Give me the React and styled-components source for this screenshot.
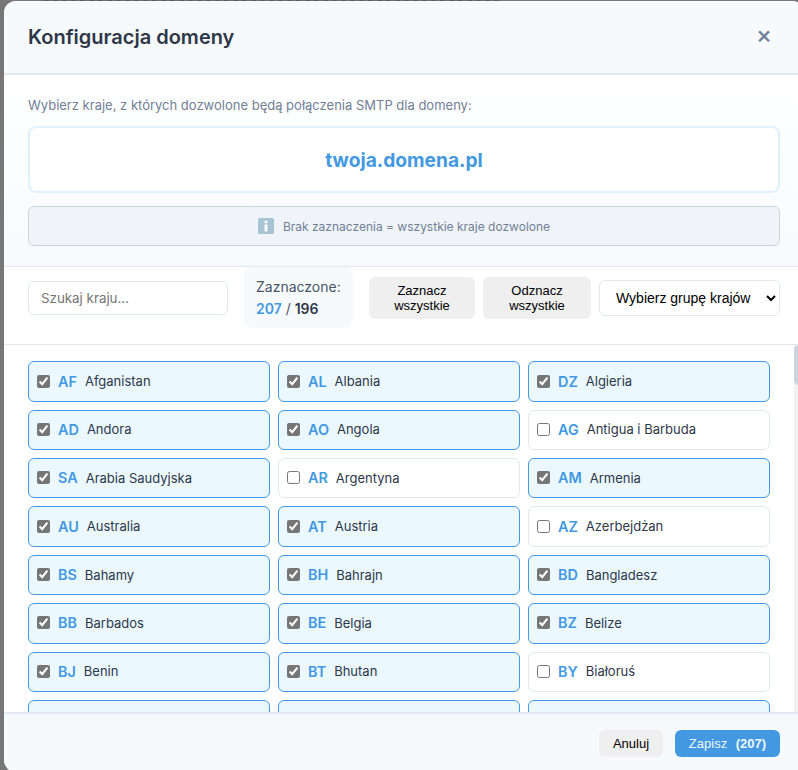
import React from "react";
import styled, { createGlobalStyle } from "styled-components";

const Global = createGlobalStyle`
  html, body { margin: 0; padding: 0; height: 100%; overflow: hidden; background: #777777; }
  * { box-sizing: border-box; }
`;

const Backdrop = styled.div`
  width: 798px;
  height: 770px;
  overflow: hidden;
  padding: 1px 0 0 4px;
  background: repeating-linear-gradient(90deg, #555c6a 0 5px, #777777 5px 9px) 44px 0 / 458px 1px no-repeat, #777777;
  font-family: Inter, "Liberation Sans", sans-serif;
`;

const Modal = styled.div`
  width: 800px;
  height: 771px;
  display: flex;
  flex-direction: column;
  background: #ffffff;
  border-radius: 12px;
  overflow: hidden;
`;

const Header = styled.header`
  flex: none;
  height: 74px;
  padding: 0 24px;
  display: flex;
  align-items: center;
  justify-content: space-between;
  background: #f7fafc;
  border-bottom: 2px solid #e2e8f0;
`;

const Title = styled.h2`
  margin: 0;
  font-size: 20px;
  font-weight: 600;
  color: #2d3748;
`;

const Close = styled.button`
  width: 32px;
  height: 32px;
  padding: 0 0 4px;
  border: none;
  background: transparent;
  color: #718096;
  font-family: Inter, sans-serif;
  font-size: 24px;
  font-weight: 500;
  line-height: 1;
`;

const Intro = styled.section`
  flex: none;
  height: 192px;
  padding: 20px 24px 0;
  background: linear-gradient(180deg, #ffffff 0%, #f7fafc 100%);
  border-bottom: 1px solid #e2e8f0;
`;

const Lead = styled.p`
  margin: 0 0 11px;
  font-size: 13px;
  line-height: 20px;
  color: #718096;
`;

const DomainCard = styled.div`
  height: 67px;
  display: flex;
  align-items: center;
  justify-content: center;
  background: #ffffff;
  border: 2px solid #e1f2fe;
  border-radius: 8px;
  font-size: 19.2px;
  font-weight: 700;
  color: #4299e1;
`;

const Notice = styled.div`
  margin-top: 13px;
  height: 40px;
  display: flex;
  align-items: center;
  justify-content: center;
  gap: 9px;
  background: #f0f4f8;
  border: 1px solid #cbd5e0;
  border-radius: 6px;
  font-size: 12px;
  color: #718096;
`;

const Toolbar = styled.div`
  flex: none;
  height: 78px;
  padding: 0 24px 16px;
  display: flex;
  align-items: center;
  gap: 16px;
  border-bottom: 1px solid #e2e8f0;
`;

const Search = styled.input`
  width: 200px;
  height: 34px;
  padding: 0 12px;
  border: 1px solid #e2e8f0;
  border-radius: 6px;
  font-family: Inter, sans-serif;
  font-size: 13.33px;
  background: #ffffff;
  &::placeholder { color: #757575; }
`;

const Stats = styled.div`
  width: 109px;
  height: 61px;
  padding: 9px 12px;
  background: #f7fafc;
  border-radius: 8px;
  font-size: 14px;
  line-height: 22px;
  color: #4a5568;
`;

const Count = styled.strong`
  font-weight: 600;
  color: ${(p) => (p.$accent ? "#4299e1" : "#2d3748")};
`;

const Actions = styled.div`
  display: flex;
  align-items: center;
  gap: 8px;
`;

const GreyButton = styled.button`
  width: ${(p) => p.$width}px;
  height: ${(p) => p.$height}px;
  padding: 0 8px;
  border: none;
  border-radius: 6px;
  background: #efefef;
  color: #000000;
  font-family: "Liberation Sans", Arial, sans-serif;
  font-size: 13px;
  line-height: 15px;
`;

const GroupSelect = styled.select`
  width: 181px;
  height: 36px;
  padding: 0 8px 0 12px;
  background: #ffffff;
  border: 1px solid #e2e8f0;
  border-radius: 6px;
  color: #000000;
  font-family: "Liberation Sans", Arial, sans-serif;
  font-size: 14px;
`;

const ListPane = styled.div`
  position: relative;
  flex: 1;
  min-height: 0;
  overflow: hidden;
  padding: 16.4px 34px 0 24px;
`;

const Grid = styled.div`
  display: grid;
  grid-template-columns: repeat(3, 1fr);
  grid-auto-rows: 40.36px;
  gap: 8px;
`;

const ScrollTrack = styled.div`
  position: absolute;
  top: 0;
  right: 0;
  bottom: 0;
  width: 10px;
  background: #f1f1f1;
`;

const ScrollThumb = styled.div`
  height: 40px;
  background: #cbd5e0;
  border-radius: 5px;
`;

const Card = styled.label`
  display: flex;
  align-items: center;
  gap: 8px;
  padding: 0 8px 1px;
  border: 1px solid ${(p) => (p.$on ? "#4299e1" : "#e2e8f0")};
  border-radius: 6px;
  background: ${(p) => (p.$on ? "#ebf8ff" : "#ffffff")};
`;

const Check = styled.input`
  width: 13px;
  height: 13px;
  margin: 0;
  flex: none;
  accent-color: #767676;
`;

const Code = styled.span`
  font-size: 14.4px;
  font-weight: 600;
  color: #4299e1;
`;

const Name = styled.span`
  font-size: 13px;
  color: #2d3748;
`;

const Footer = styled.footer`
  flex: none;
  height: 60px;
  padding: 16px 24px 0;
  display: flex;
  justify-content: flex-end;
  gap: 12px;
  background: #f7fafc;
  border-top: 2px solid #e2e8f0;
`;

const SaveButton = styled.button`
  width: 105px;
  height: 27px;
  padding: 0;
  border: none;
  border-radius: 6px;
  background: #4299e1;
  color: #f0f7fd;
  font-family: "Liberation Sans", Arial, sans-serif;
  font-size: 13px;
  b { margin-left: 5px; }
`;

const InfoIcon = () => (
  <svg width="16" height="16" viewBox="0 0 16 16" aria-hidden="true">
    <rect width="16" height="16" rx="1.5" fill="#a7c4d2" />
    <rect x="6.6" y="2.6" width="2.8" height="2.6" fill="#ffffff" />
    <rect x="6.6" y="6.4" width="2.8" height="7" fill="#ffffff" />
  </svg>
);

const countries = [
  ["AF", "Afganistan", 1], ["AL", "Albania", 1], ["DZ", "Algieria", 1],
  ["AD", "Andora", 1], ["AO", "Angola", 1], ["AG", "Antigua i Barbuda", 0],
  ["SA", "Arabia Saudyjska", 1], ["AR", "Argentyna", 0], ["AM", "Armenia", 1],
  ["AU", "Australia", 1], ["AT", "Austria", 1], ["AZ", "Azerbejdżan", 0],
  ["BS", "Bahamy", 1], ["BH", "Bahrajn", 1], ["BD", "Bangladesz", 1],
  ["BB", "Barbados", 1], ["BE", "Belgia", 1], ["BZ", "Belize", 1],
  ["BJ", "Benin", 1], ["BT", "Bhutan", 1], ["BY", "Białoruś", 0],
  ["r8a", "", 1], ["r8b", "", 1], ["r8c", "", 1],
];

export default function App() {
  return (
    <>
      <Global />
      <Backdrop>
        <Modal>
          <Header>
            <Title>Konfiguracja domeny</Title>
            <Close type="button">×</Close>
          </Header>
          <Intro>
            <Lead>Wybierz kraje, z których dozwolone będą połączenia SMTP dla domeny:</Lead>
            <DomainCard>twoja.domena.pl</DomainCard>
            <Notice>
              <InfoIcon />
              <span>Brak zaznaczenia = wszystkie kraje dozwolone</span>
            </Notice>
          </Intro>
          <Toolbar>
            <Search placeholder="Szukaj kraju..." />
            <Stats>
              Zaznaczone:
              <br />
              <Count $accent>207</Count> / <Count>196</Count>
            </Stats>
            <Actions>
              <GreyButton type="button" $width={106} $height={42}>Zaznacz wszystkie</GreyButton>
              <GreyButton type="button" $width={108} $height={42}>Odznacz wszystkie</GreyButton>
              <GroupSelect defaultValue="">
                <option value="">Wybierz grupę krajów</option>
              </GroupSelect>
            </Actions>
          </Toolbar>
          <ListPane>
            <Grid>
              {countries.map(([code, name, on]) => (
                <Card key={code} $on={!!on}>
                  {name && <Check type="checkbox" defaultChecked={!!on} />}
                  {name && <Code>{code}</Code>}
                  {name && <Name>{name}</Name>}
                </Card>
              ))}
            </Grid>
            <ScrollTrack>
              <ScrollThumb />
            </ScrollTrack>
          </ListPane>
          <Footer>
            <GreyButton type="button" $width={64} $height={27}>Anuluj</GreyButton>
            <SaveButton type="button">Zapisz <b>(207)</b></SaveButton>
          </Footer>
        </Modal>
      </Backdrop>
    </>
  );
}
